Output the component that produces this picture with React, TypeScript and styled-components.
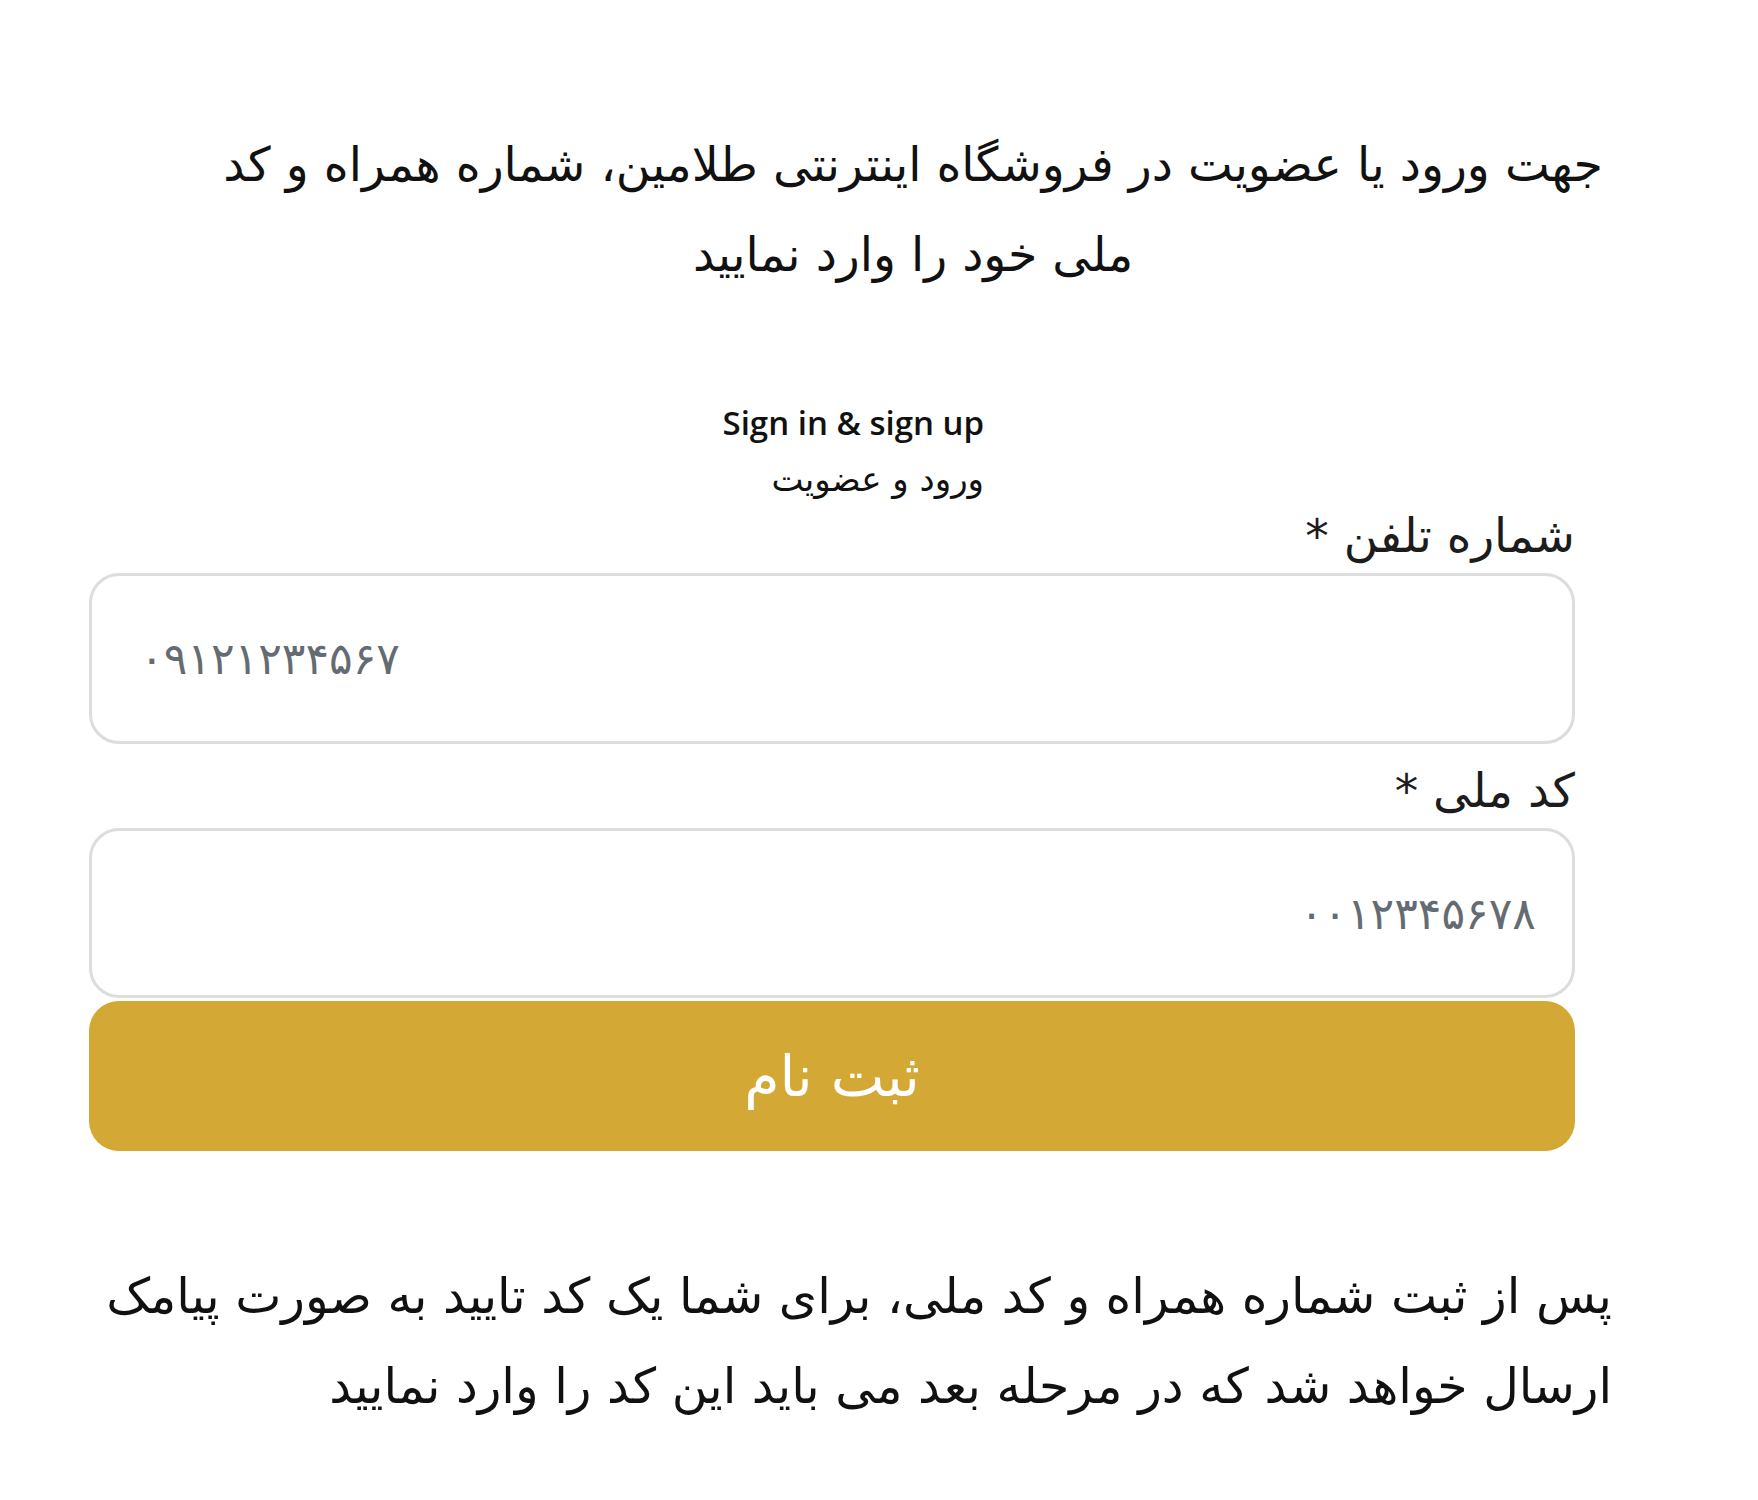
import React from "react";
import styled, { createGlobalStyle } from "styled-components";

const GlobalStyle = createGlobalStyle`
  html, body {
    margin: 0;
    padding: 0;
    background: #ffffff;
  }
  body {
    font-family: "Segoe UI", "Open Sans", "DejaVu Sans", sans-serif;
    color: #111111;
  }
  * {
    box-sizing: border-box;
  }
`;

const Page = styled.div`
  direction: rtl;
  width: 1758px;
  min-height: 1500px;
  padding-top: 120px;
`;

const Intro = styled.p`
  margin: 0;
  padding: 0 126px 0 194px;
  text-align: center;
  font-family: "DejaVu Sans", sans-serif;
  font-size: 47.5px;
  line-height: 90px;
  font-weight: 400;
  color: #111111;
`;

const Heading = styled.div`
  margin: 94px 774px 0 0;
  text-align: right;
  line-height: 57px;
`;

const EnTitle = styled.div`
  direction: ltr;
  text-align: right;
  font-family: "Open Sans", "Noto Sans", sans-serif;
  font-weight: 600;
  font-size: 33px;
  color: #111111;
`;

const FaTitle = styled.div`
  font-family: "DejaVu Sans", sans-serif;
  font-size: 34px;
  color: #111111;
`;

const Form = styled.form`
  margin: 0 183px 0 89px;
  display: flex;
  flex-direction: column;
`;

const Label = styled.label<{ $top: number }>`
  display: block;
  margin: ${(p) => p.$top}px 0 9px;
  font-family: "DejaVu Sans", sans-serif;
  font-size: 47px;
  line-height: 56px;
  color: #1c1c1c;
`;

const Field = styled.input<{ $ltr?: boolean; $h: number }>`
  display: block;
  width: 100%;
  height: ${(p) => p.$h}px;
  border: 3px solid #dddddd;
  border-radius: 30px;
  background: #ffffff;
  padding: ${(p) => (p.$ltr ? "0 38px 0 48px" : "0 36px 0 48px")};
  direction: ${(p) => (p.$ltr ? "ltr" : "rtl")};
  text-align: ${(p) => (p.$ltr ? "left" : "right")};
  font-family: "DejaVu Sans", sans-serif;
  font-size: 44px;
  color: #333333;
  outline: none;
  &::placeholder {
    color: #646b72;
    opacity: 1;
  }
`;

const Submit = styled.button`
  margin-top: 3px;
  height: 150px;
  width: 100%;
  border: none;
  border-radius: 30px;
  background: #d4a834;
  color: #ffffff;
  font-family: "DejaVu Sans", sans-serif;
  font-size: 57px;
  cursor: pointer;
`;

const Note = styled.p`
  margin: 101px 146px 0 100px;
  text-align: right;
  font-family: "DejaVu Sans", sans-serif;
  font-size: 49px;
  line-height: 90px;
  color: #111111;
`;

export default function App() {
  return (
    <>
      <GlobalStyle />
      <Page>
        <Intro>
          جهت ورود یا عضویت در فروشگاه اینترنتی طلامین، شماره همراه و کد
          <br />
          ملی خود را وارد نمایید
        </Intro>

        <Heading>
          <EnTitle>Sign in &amp; sign up</EnTitle>
          <FaTitle>ورود و عضویت</FaTitle>
        </Heading>

        <Form onSubmit={(e) => e.preventDefault()}>
          <Label $top={0} htmlFor="phone">
            شماره تلفن *
          </Label>
          <Field id="phone" $ltr $h={171} placeholder="۰۹۱۲۱۲۳۴۵۶۷" />

          <Label $top={19} htmlFor="nid">
            کد ملی *
          </Label>
          <Field id="nid" $h={170} placeholder="۰۰۱۲۳۴۵۶۷۸" />

          <Submit type="submit">ثبت نام</Submit>
        </Form>

        <Note>
          پس از ثبت شماره همراه و کد ملی، برای شما یک کد تایید به صورت پیامک
          <br />
          ارسال خواهد شد که در مرحله بعد می باید این کد را وارد نمایید
        </Note>
      </Page>
    </>
  );
}
